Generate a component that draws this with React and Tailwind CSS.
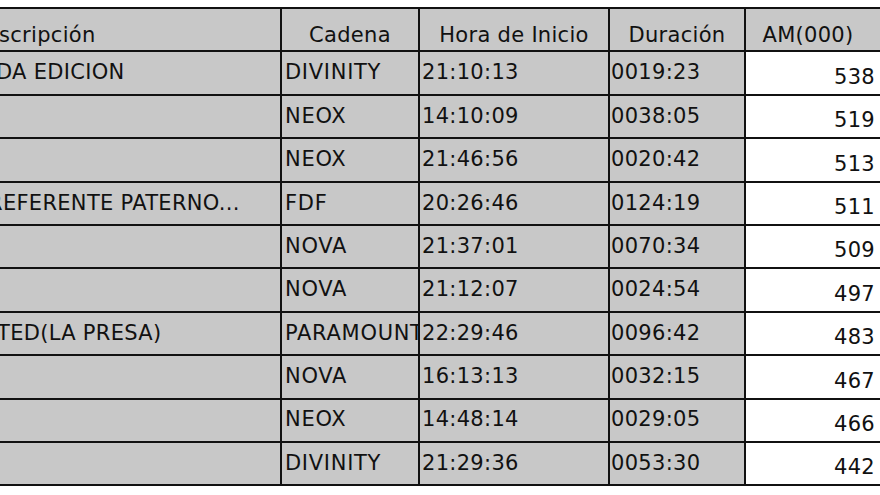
const rows = [
  { desc: 'DA EDICION', shift: '-ml-[4px]', cadena: 'DIVINITY', hora: '21:10:13', dur: '0019:23', am: 538 },
  { desc: '', cadena: 'NEOX', hora: '14:10:09', dur: '0038:05', am: 519 },
  { desc: '', cadena: 'NEOX', hora: '21:46:56', dur: '0020:42', am: 513 },
  { desc: 'REFERENTE PATERNO...', shift: '-ml-[12px]', cadena: 'FDF', hora: '20:26:46', dur: '0124:19', am: 511 },
  { desc: '', cadena: 'NOVA', hora: '21:37:01', dur: '0070:34', am: 509 },
  { desc: '', cadena: 'NOVA', hora: '21:12:07', dur: '0024:54', am: 497 },
  { desc: 'TED(LA PRESA)', shift: '-ml-[3px]', cadena: 'PARAMOUNT', hora: '22:29:46', dur: '0096:42', am: 483 },
  { desc: '', cadena: 'NOVA', hora: '16:13:13', dur: '0032:15', am: 467 },
  { desc: '', cadena: 'NEOX', hora: '14:48:14', dur: '0029:05', am: 466 },
  { desc: '', cadena: 'DIVINITY', hora: '21:29:36', dur: '0053:30', am: 442 },
];

const grey = 'bg-[#c8c8c8]';

export default function App() {
  return (
    <div className="w-[880px] h-[495px] overflow-hidden bg-white pt-[7px] font-['DejaVu_Sans',sans-serif] text-[21px] text-[#111] tracking-[0.3px]">
      <div className="border-t-2 border-[#111]">
        {/* cabecera */}
        <div className="flex h-[43.4px] border-b-2 border-[#111]">
          <div className={`${grey} w-[282px] shrink-0 border-r-2 border-[#111] flex items-center pt-[13px] overflow-hidden whitespace-nowrap`}>
            <span className="-ml-[1px]">scripción</span>
          </div>
          <div className={`${grey} w-[138px] shrink-0 border-r-2 border-[#111] flex items-center justify-center pt-[13px]`}>
            Cadena
          </div>
          <div className={`${grey} w-[190px] shrink-0 border-r-2 border-[#111] flex items-center justify-center pt-[13px] whitespace-nowrap`}>
            Hora de Inicio
          </div>
          <div className={`${grey} w-[136px] shrink-0 border-r-2 border-[#111] flex items-center justify-center pt-[13px]`}>
            Duración
          </div>
          <div className={`${grey} flex-1 flex items-center justify-center pt-[13px] pr-[10px]`}>
            AM(000)
          </div>
        </div>

        {rows.map((r, i) => (
          <div key={i} className="flex h-[43.4px] border-b-2 border-[#111]">
            <div className={`${grey} w-[282px] shrink-0 border-r-2 border-[#111] flex items-center overflow-hidden whitespace-nowrap`}>
              {r.desc && <span className={`shrink-0 ${r.shift}`}>{r.desc}</span>}
            </div>
            <div className={`${grey} w-[138px] shrink-0 border-r-2 border-[#111] flex items-center pl-[3px] overflow-hidden whitespace-nowrap tracking-[0.7px]`}>
              {r.cadena}
            </div>
            <div className={`${grey} w-[190px] shrink-0 border-r-2 border-[#111] flex items-center pl-[2px]`}>
              {r.hora}
            </div>
            <div className={`${grey} w-[136px] shrink-0 border-r-2 border-[#111] flex items-center pl-[1px]`}>
              {r.dur}
            </div>
            <div className="bg-white flex-1 flex items-center justify-end pt-[9px] pr-[5px]">
              {r.am}
            </div>
          </div>
        ))}
      </div>
    </div>
  );
}
